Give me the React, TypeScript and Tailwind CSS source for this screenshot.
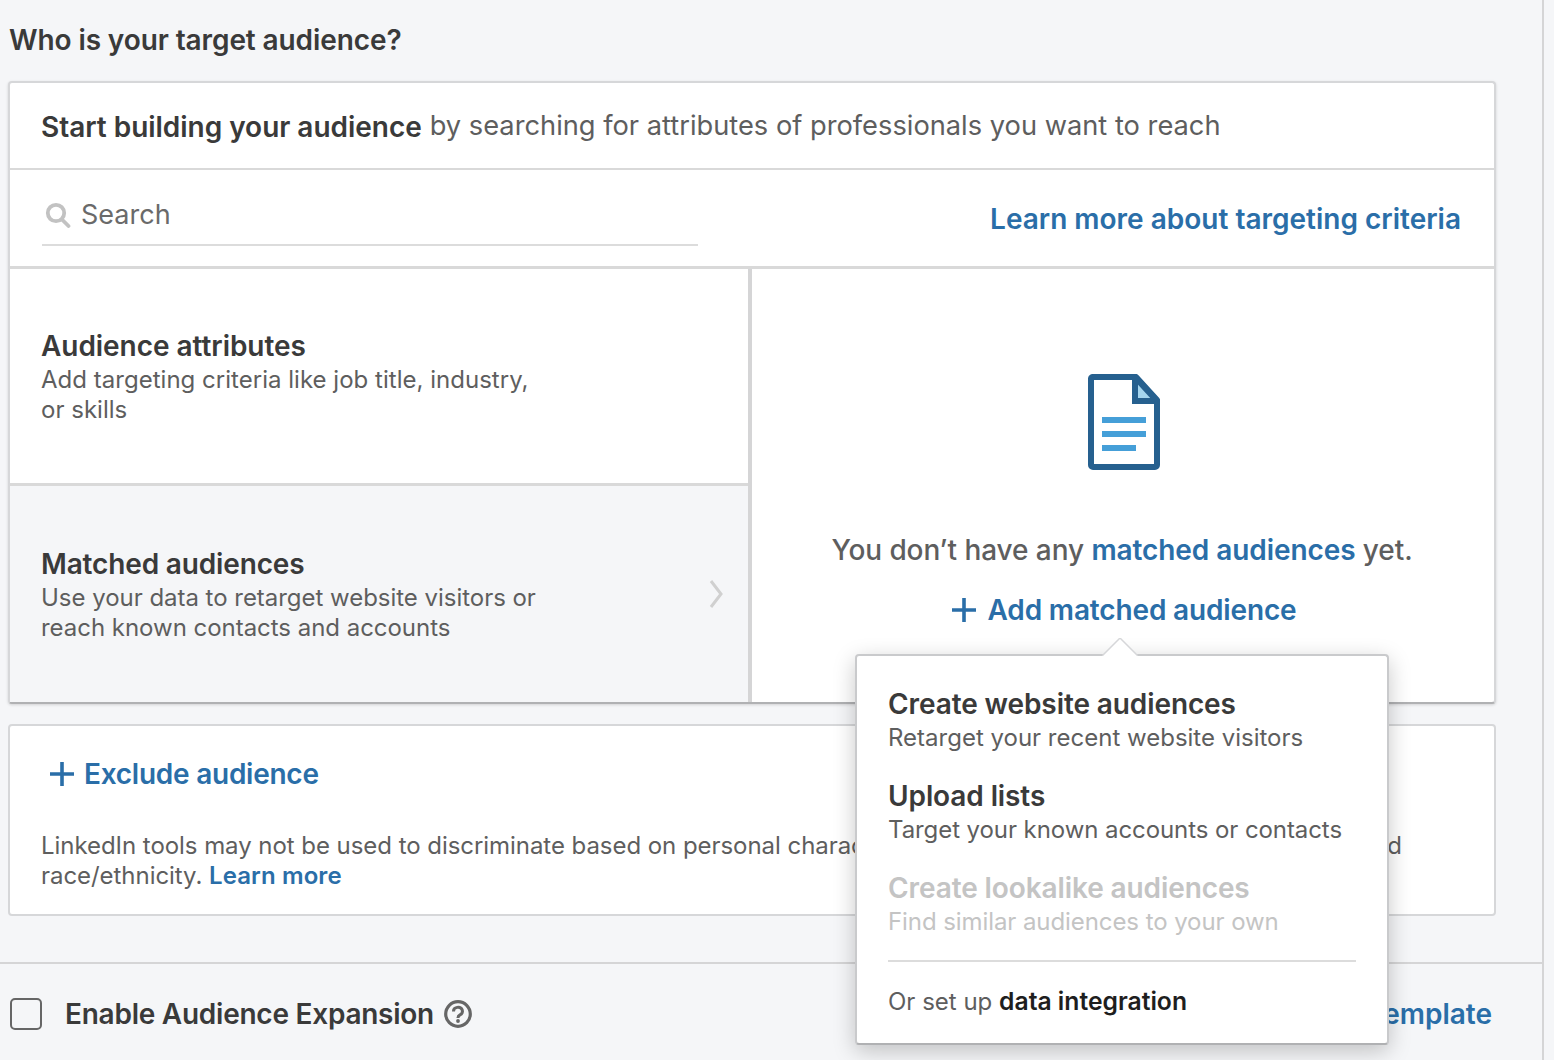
import React from "react";

const Plus = ({ className }: { className: string }) => (
  <svg viewBox="0 0 26 26" className={className} fill="none" stroke="#2a6ea8" strokeWidth="3.6">
    <path d="M13 1v24M1 13h24" />
  </svg>
);

function Popup() {
  return (
    <div className="absolute left-[855px] top-[654px] h-[391px] w-[534px] rounded-[4px] border-2 border-[#c9cacc] border-b-[#b0b1b3] bg-white px-[31px] pt-[31px] shadow-[0_6px_22px_rgba(0,0,0,0.22)]">
      <svg viewBox="0 0 36 18" className="absolute left-[245px] top-[-18px] h-[18px] w-[36px]">
        <path d="M0 18 L18 0 L36 18" fill="#fff" stroke="#d6d7d9" strokeWidth="1.5" />
      </svg>
      <p className="text-[28px] leading-[34px] font-semibold tracking-[-0.1px] text-[#3a3a3a]">Create website audiences</p>
      <p className="mt-[1px] text-[24px] leading-[32px] text-[#5e5e5e]">Retarget your recent website visitors</p>
      <p className="mt-[25px] text-[28px] leading-[34px] font-semibold tracking-[-0.1px] text-[#3a3a3a]">Upload lists</p>
      <p className="mt-[1px] text-[24px] leading-[32px] tracking-[-0.08px] text-[#5e5e5e]">Target your known accounts or contacts</p>
      <p className="mt-[25px] text-[28px] leading-[34px] font-semibold tracking-[-0.1px] text-[#c4c4c4]">Create lookalike audiences</p>
      <p className="mt-[1px] text-[24px] leading-[32px] tracking-[-0.08px] text-[#c4c4c4]">Find similar audiences to your own</p>
      <div className="mt-[22px] h-[2px] bg-[#dcdcdc]" />
      <p className="mt-[22px] text-[24px] leading-[34px] text-[#5e5e5e]">
        Or set up <span className="text-[24.7px] font-semibold text-[#1e1e1e]">data integration</span>
      </p>
    </div>
  );
}

export default function App() {
  return (
    <div className="relative h-[1060px] w-[1554px] overflow-hidden bg-[#f5f6f8] font-['Inter',sans-serif] text-[#3a3a3a]">
      <div className="flex h-full w-[1544px] flex-col border-r-2 border-[#d5d5d6]">
        <div className="w-[1496px] pl-[8px]">
          <h1 className="pt-[21px] pl-[1px] text-[28px] leading-[38px] font-semibold tracking-[-0.1px] text-[#3a3a3a]">Who is your target audience?</h1>

          <div className="mt-[22px] rounded-[4px] border-2 border-[#d6d7d9] border-b-[#b0b1b3] bg-white shadow-[0_1px_3px_rgba(0,0,0,0.15)]">
            <div className="flex h-[87px] items-center border-b-2 border-[#d9d9d9] pl-[31px] pt-[2px]">
              <span className="text-[28px] font-semibold tracking-[-0.03px] text-[#3a3a3a]">Start building your audience</span>
              <span className="ml-[8px] text-[27.25px] text-[#5e5e5e]">by searching for attributes of professionals you want to reach</span>
            </div>
            <div className="flex h-[99px] justify-between border-b-[3px] border-[#d9d9d9] pl-[32px] pr-[33px]">
              <div className="mt-[20px] flex h-[56px] w-[656px] items-center border-b-2 border-[#dcdcdc] pb-[4px] pl-[3px]">
                <svg viewBox="0 0 26 26" className="h-[26px] w-[26px]" fill="none" stroke="#c2c2c2" strokeWidth="3.8">
                  <circle cx="11" cy="11" r="8.2" />
                  <path d="M17 17.5l6.5 6.5" strokeLinecap="round" />
                </svg>
                <span className="ml-[10px] text-[27px] text-[#6a6a6a]">Search</span>
              </div>
              <a className="mt-[30px] text-[28px] leading-[38px] font-semibold text-[#2a6ea8]">Learn more about targeting criteria</a>
            </div>
            <div className="flex h-[433px]">
              <div className="flex w-[742px] flex-col border-r-4 border-[#d5d5d6]">
                <div className="h-[217px] border-b-[3px] border-[#d9d9d9] pl-[31px] pt-[60px]">
                  <p className="text-[28px] leading-[34px] font-semibold tracking-[-0.05px] text-[#3a3a3a]">Audience attributes</p>
                  <p className="mt-[2px] w-[500px] text-[24px] leading-[30px] tracking-[0.02px] text-[#5e5e5e]">Add targeting criteria like job title, industry, or skills</p>
                </div>
                <div className="flex flex-1 items-center justify-between bg-[#f5f6f8] pl-[31px] pr-[25px]">
                  <div className="pt-[1px]">
                    <p className="pt-[1px] text-[28px] leading-[34px] font-semibold tracking-[-0.15px] text-[#3a3a3a]">Matched audiences</p>
                    <p className="mt-[2px] w-[520px] text-[24px] leading-[30px] tracking-[-0.03px] text-[#5e5e5e]">Use your data to retarget website visitors or reach known contacts and accounts</p>
                  </div>
                  <svg viewBox="0 0 14 30" className="h-[30px] w-[14px]" fill="none" stroke="#d0d0d0" strokeWidth="3">
                    <path d="M2 2l10 13L2 28" />
                  </svg>
                </div>
              </div>
              <div className="flex flex-1 flex-col items-center pt-[105px]">
                <svg viewBox="0 0 72 96" className="ml-[2px] h-[96px] w-[72px]">
                  <path d="M4 3h44l21 23v65a2 2 0 0 1-2 2H5a2 2 0 0 1-2-2V5a2 2 0 0 1 1-2z" fill="#fff" stroke="#26608f" strokeWidth="6" strokeLinejoin="round" />
                  <path d="M47 3v24h22z" fill="#a5d5ee" stroke="#26608f" strokeWidth="6" strokeLinejoin="miter" />
                  <path d="M14 43h44v6H14zM14 57h44v6H14zM14 71h34v6H14z" fill="#459fd8" />
                </svg>
                <p className="mt-[61px] mr-[2px] text-[28px] leading-[38px] font-medium tracking-[-0.08px] text-[#5e5e5e]">
                  You don’t have any <span className="font-semibold text-[#2a6ea8]">matched audiences</span> yet.
                </p>
                <div className="mt-[22px] flex items-center gap-[11px]">
                  <Plus className="ml-[1px] h-[26px] w-[26px]" />
                  <span className="text-[28px] leading-[38px] font-semibold tracking-[-0.15px] text-[#2a6ea8]">Add matched audience</span>
                </div>
              </div>
            </div>
          </div>

          <div className="mt-[20px] h-[192px] rounded-[4px] border-2 border-[#d6d7d9] bg-white pl-[31px] pt-[29px]">
            <div className="flex items-center gap-[9px] pl-[8px]">
              <Plus className="h-[26px] w-[26px]" />
              <span className="text-[28px] leading-[38px] font-semibold tracking-[-0.25px] text-[#2a6ea8]">Exclude audience</span>
            </div>
            <div className="mt-[38px] w-[1361px] text-[24px] leading-[30px] tracking-[-0.05px] text-[#5e5e5e]">
              <p className="flex justify-between">
                <span>LinkedIn tools may not be used to discriminate based on personal characteristics like gender, age,</span>
                <span>and</span>
              </p>
              <p>
                race/ethnicity. <span className="font-semibold tracking-[0.1px] text-[#2a6ea8]">Learn more</span>
              </p>
            </div>
          </div>
        </div>

        <div className="mt-[46px] flex h-[97px] w-full items-center justify-between border-t-2 border-[#d5d5d6] pl-[10px] pr-[50px] pt-[4px]">
          <div className="flex items-center">
            <div className="h-[32px] w-[32px] rounded-[5px] border-2 border-[#666]" />
            <span className="ml-[23px] text-[28px] font-semibold tracking-[-0.25px] text-[#3a3a3a]">Enable Audience Expansion</span>
            <svg viewBox="0 0 28 28" className="ml-[10px] h-[28px] w-[28px]" fill="none">
              <circle cx="14" cy="14" r="12.3" stroke="#666" strokeWidth="3.2" />
              <path d="M9.5 11.5a4.5 4 0 1 1 6.5 3.4c-1.4.8-2 1.4-2 3" stroke="#666" strokeWidth="3" />
              <circle cx="14" cy="21" r="1.9" fill="#666" />
            </svg>
          </div>
          <a className="text-[28px] font-semibold text-[#2a6ea8]">Save as template</a>
        </div>
      </div>
      <Popup />
    </div>
  );
}
